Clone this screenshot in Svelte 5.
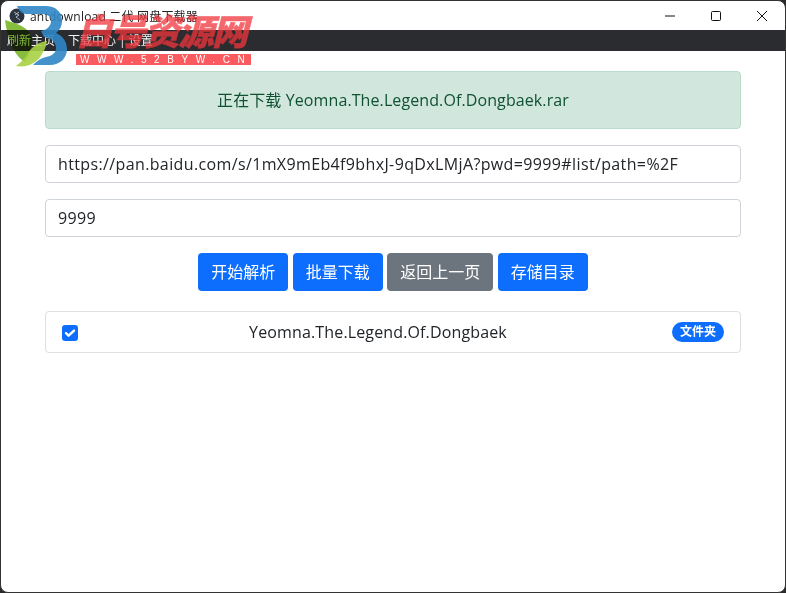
<script>
  const buttons = [
    { label: '开始解析', kind: 'primary' },
    { label: '批量下载', kind: 'primary' },
    { label: '返回上一页', kind: 'secondary' },
    { label: '存储目录', kind: 'primary' }
  ];
  let url = 'https://pan.baidu.com/s/1mX9mEb4f9bhxJ-9qDxLMjA?pwd=9999#list/path=%2F';
  let pwd = '9999';
  let checked = true;
</script>

<div class="window">
  <header class="titlebar">
    <div class="title-left">
      <svg class="app-icon" width="16" height="16" viewBox="0 0 16 16">
        <circle cx="8" cy="8" r="7.5" fill="#2c3440" />
        <path d="M5 4l5 3-3 2 4 3M10 4L6 7" fill="none" stroke="#aeb6c2" stroke-width="1" />
      </svg>
      <span class="title-text">antdownload 二代 网盘下载器</span>
    </div>
    <div class="controls">
      <svg width="12" height="12" viewBox="0 0 12 12"><path d="M1 6h10" stroke="#111" stroke-width="1" /></svg>
      <svg width="12" height="12" viewBox="0 0 12 12"><rect x="1.5" y="1.5" width="9" height="9" rx="1" fill="none" stroke="#111" /></svg>
      <svg width="12" height="12" viewBox="0 0 12 12"><path d="M1 1l10 10M11 1L1 11" stroke="#111" /></svg>
    </div>
  </header>

  <nav class="menubar">
    <span>刷新主页</span>
    <span class="menu-gap">下载中心</span>
    <span class="sep">|</span>
    <span>设置</span>
  </nav>

  <main class="content">
    <div class="alert">正在下载 Yeomna.The.Legend.Of.Dongbaek.rar</div>
    <input class="field" type="text" bind:value={url} />
    <input class="field" type="text" bind:value={pwd} />

    <div class="actions">
      {#each buttons as b}
        <button class="btn {b.kind}">{b.label}</button>
      {/each}
    </div>

    <div class="list-item">
      <label class="check" class:on={checked}>
        <svg width="16" height="16" viewBox="0 0 16 16">
          <rect width="16" height="16" rx="3.2" fill="#0d6efd" />
          <path d="M4 8.2l2.6 2.5L12 5.6" fill="none" stroke="#fff" stroke-width="2.4" stroke-linecap="round" stroke-linejoin="round" />
        </svg>
      </label>
      <span class="name">Yeomna.The.Legend.Of.Dongbaek</span>
      <span class="badge">文件夹</span>
    </div>
  </main>

  <div class="watermark">
    <svg class="wm-logo" width="68" height="68" viewBox="0 0 68 68">
      <path fill-rule="evenodd" d="M17 6H45C56 6 62 12 62 21C62 26 60 30 56 33C63 36 67 42 67 49C67 58 60 65 50 65H33C38 60 42 58 46 57C52 56 56 53 56 48C56 42 51 38 44 37L41 31C47 30 51 26 51 21C51 16 47 14 42 14H26C22 14 19 11 17 6Z" fill="#2f86c5" opacity="0.9" />
    </svg>
    <svg class="wm-leaf" width="68" height="68" viewBox="0 0 68 68">
      <path d="M5 20C13 23 27 25 31 36C33 43 31 53 25 62C13 55 7 36 5 20Z" fill="#86bd3c" />
    </svg>
    <svg class="wm-leaf-front" width="68" height="68" viewBox="0 0 68 68">
      <path d="M47 41C36 42 29 50 26 56C24 59 21 62 16 66C28 68 37 63 42 54C44 51 46 47 47 41Z" fill="#a8d044" opacity="0.9" />
    </svg>
    <div class="wm-text">
      <div class="wm-title">白号资源网</div>
      <div class="wm-url">WWW.52BYW.CN</div>
    </div>
  </div>
</div>

<style>
  :global(body) {
    background: #2a2a2a;
  }

  .window {
    position: relative;
    width: 786px;
    height: 593px;
    box-sizing: border-box;
    background: #fff;
    border: 1px solid #333;
    border-radius: 8px;
    overflow: hidden;
    font-family: "Open Sans", "Noto Sans CJK SC", sans-serif;
    color: #212529;
  }

  .titlebar {
    height: 29px;
    display: flex;
    align-items: center;
    justify-content: space-between;
    font-size: 12px;
  }

  .title-left {
    display: flex;
    align-items: center;
    gap: 5px;
    padding-left: 8px;
  }

  .title-text {
    color: #222;
    letter-spacing: 0.2px;
  }

  .controls {
    display: flex;
    gap: 34px;
    padding-right: 17px;
  }

  .controls svg {
    display: block;
  }

  .menubar {
    height: 21px;
    background: #2b2c30;
    color: #f2f2f2;
    font-size: 12px;
    line-height: 21px;
    display: flex;
    gap: 3px;
    padding-left: 6px;
  }

  .menu-gap {
    margin-left: 10px;
  }

  .content {
    padding: 20px 44px 0;
    display: flex;
    flex-direction: column;
  }

  .alert {
    height: 58px;
    box-sizing: border-box;
    padding-bottom: 2px;
    background: #d1e7dd;
    border: 1px solid #badbcc;
    border-radius: 4px;
    color: #0f5132;
    font-size: 16px;
    letter-spacing: 0.1px;
    display: flex;
    align-items: center;
    justify-content: center;
  }

  .field {
    height: 38px;
    box-sizing: border-box;
    margin-top: 16px;
    padding: 0 12px;
    border: 1px solid #ced4da;
    border-radius: 4px;
    font: inherit;
    font-size: 16px;
    letter-spacing: 0.37px;
    color: #212529;
    background: #fff;
    outline: none;
  }

  .actions {
    display: flex;
    justify-content: center;
    gap: 4.5px;
    margin-top: 16px;
  }

  .btn {
    height: 38px;
    padding: 0 13px 2px;
    border: none;
    border-radius: 4px;
    font: inherit;
    font-size: 16px;
    color: #fff;
  }

  .primary {
    background: #0d6efd;
  }

  .secondary {
    background: #6c757d;
  }

  .list-item {
    height: 42px;
    box-sizing: border-box;
    margin-top: 20px;
    border: 1px solid #dfdfdf;
    border-radius: 4px;
    display: flex;
    align-items: center;
    padding: 0 16px;
  }

  .check {
    display: block;
    width: 16px;
    height: 16px;
    margin-top: 1px;
  }

  .check svg {
    display: block;
  }

  .name {
    flex: 1;
    text-align: center;
    font-size: 16px;
    letter-spacing: 0.14px;
    color: #212529;
    padding-left: 6px;
  }

  .badge {
    background: #0d6efd;
    color: #fff;
    border-radius: 10px;
    font-size: 12px;
    font-weight: 700;
    line-height: 12px;
    padding: 4px 8px;
  }

  .watermark {
    position: absolute;
    left: -1px;
    top: -1px;
    display: flex;
    pointer-events: none;
  }

  .wm-logo {
    display: block;
  }

  .wm-leaf,
  .wm-leaf-front {
    position: absolute;
    left: 0;
    top: 0;
  }

  .wm-leaf {
    mix-blend-mode: multiply;
  }

  .wm-text {
    margin-left: 8px;
    margin-top: 11px;
    width: 175px;
  }

  .wm-title {
    font-family: "Noto Sans CJK SC", sans-serif;
    font-size: 36px;
    line-height: 36px;
    font-weight: 900;
    font-style: italic;
    color: #f0353b;
    opacity: 0.75;
    letter-spacing: -2px;
    -webkit-text-stroke: 0.4px #f0353b;
    white-space: nowrap;
  }

  .wm-url {
    margin-top: 7px;
    height: 11px;
    background: #fb5a5f;
    color: #fff;
    font-family: "Liberation Sans", sans-serif;
    font-size: 10px;
    line-height: 11px;
    letter-spacing: 7.6px;
    padding-left: 4px;
    white-space: nowrap;
    overflow: hidden;
  }
</style>
